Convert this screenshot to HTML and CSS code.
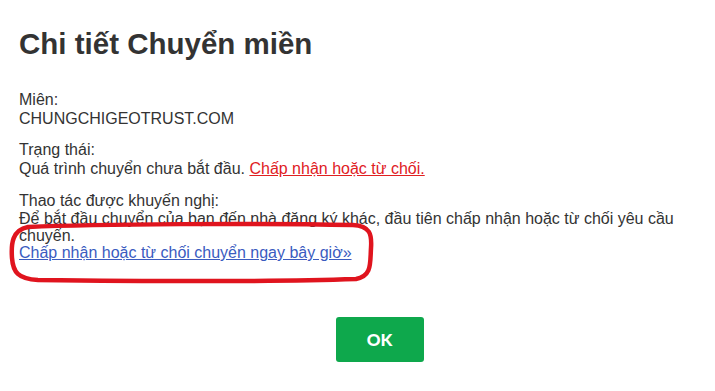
FILE: index.html
```html
<!DOCTYPE html>
<html lang="vi">
  <head>
    <meta charset="UTF-8" />
    <meta name="viewport" content="width=device-width, initial-scale=1.0" />
    <title>Chi tiết Chuyển miền</title>
    <link rel="stylesheet" href="styles.css">
  </head>
  <body>
    <main class="dialog">
      <h1 class="title">Chi tiết Chuyển miền</h1>

      <div class="field">
        <div class="label">Miên:</div>
        <div class="value">CHUNGCHIGEOTRUST.COM</div>
      </div>

      <div class="field">
        <div class="label">Trạng thái:</div>
        <div class="value">
          Quá trình chuyển chưa bắt đầu.
          <a href="#" class="link-red">Chấp nhận hoặc từ chối.</a>
        </div>
      </div>

      <div class="field action">
        <div class="label">Thao tác được khuyến nghị:</div>
        <div class="value desc">
          Để bắt đầu chuyển của bạn đến nhà đăng ký khác, đầu tiên chấp nhận hoặc từ chối yêu cầu chuyển.
        </div>
        <a href="#" class="link-blue">Chấp nhận hoặc từ chối chuyển ngay bây giờ»</a>
        <svg class="mark" width="368" height="66" viewBox="0 0 368 66">
          <path d="M20 7 C 90 4, 250 3, 345 5 C 362 6, 364 14, 363 28 C 362 44, 364 56, 348 59 C 260 62, 110 61, 30 60 C 10 59, 5 52, 4 38 C 3 24, 4 10, 20 7 Z"
            fill="none" stroke="#e0141e" stroke-width="4.5" />
        </svg>
      </div>

      <div class="footer">
        <button class="btn-ok">OK</button>
      </div>
    </main>
  </body>
</html>
```

FILE: styles.css
```css
* {
  box-sizing: border-box;
}

body {
  margin: 0;
  background: #fff;
  color: #333;
  font-family: "Liberation Sans", Arial, sans-serif;
}

.dialog {
  padding: 28px 19px 0 19px;
}

.title {
  margin: 0 0 30px 0;
  font-size: 29.5px;
  line-height: 32px;
  font-weight: bold;
  color: #333;
}

.field {
  margin-bottom: 12px;
  font-size: 16px;
  line-height: 19px;
}

.action {
  position: relative;
  margin-top: 13px;
  margin-bottom: 0;
}

.desc {
  width: 680px;
  line-height: 17px;
}

.link-red {
  color: #e0201f;
  text-decoration: underline;
}

.link-blue {
  display: block;
  line-height: 17px;
  color: #3a5bbf;
  text-decoration: underline;
}

.mark {
  position: absolute;
  left: -11px;
  top: 29px;
}

.footer {
  display: flex;
  justify-content: center;
  padding-left: 44px;
  margin-top: 56px;
}

.btn-ok {
  width: 88px;
  height: 45px;
  border: none;
  border-radius: 3px;
  background: #0ea84c;
  color: #fff;
  font-family: Lato, "Open Sans", sans-serif;
  font-weight: 900;
  font-size: 17px;
  cursor: pointer;
}
```
